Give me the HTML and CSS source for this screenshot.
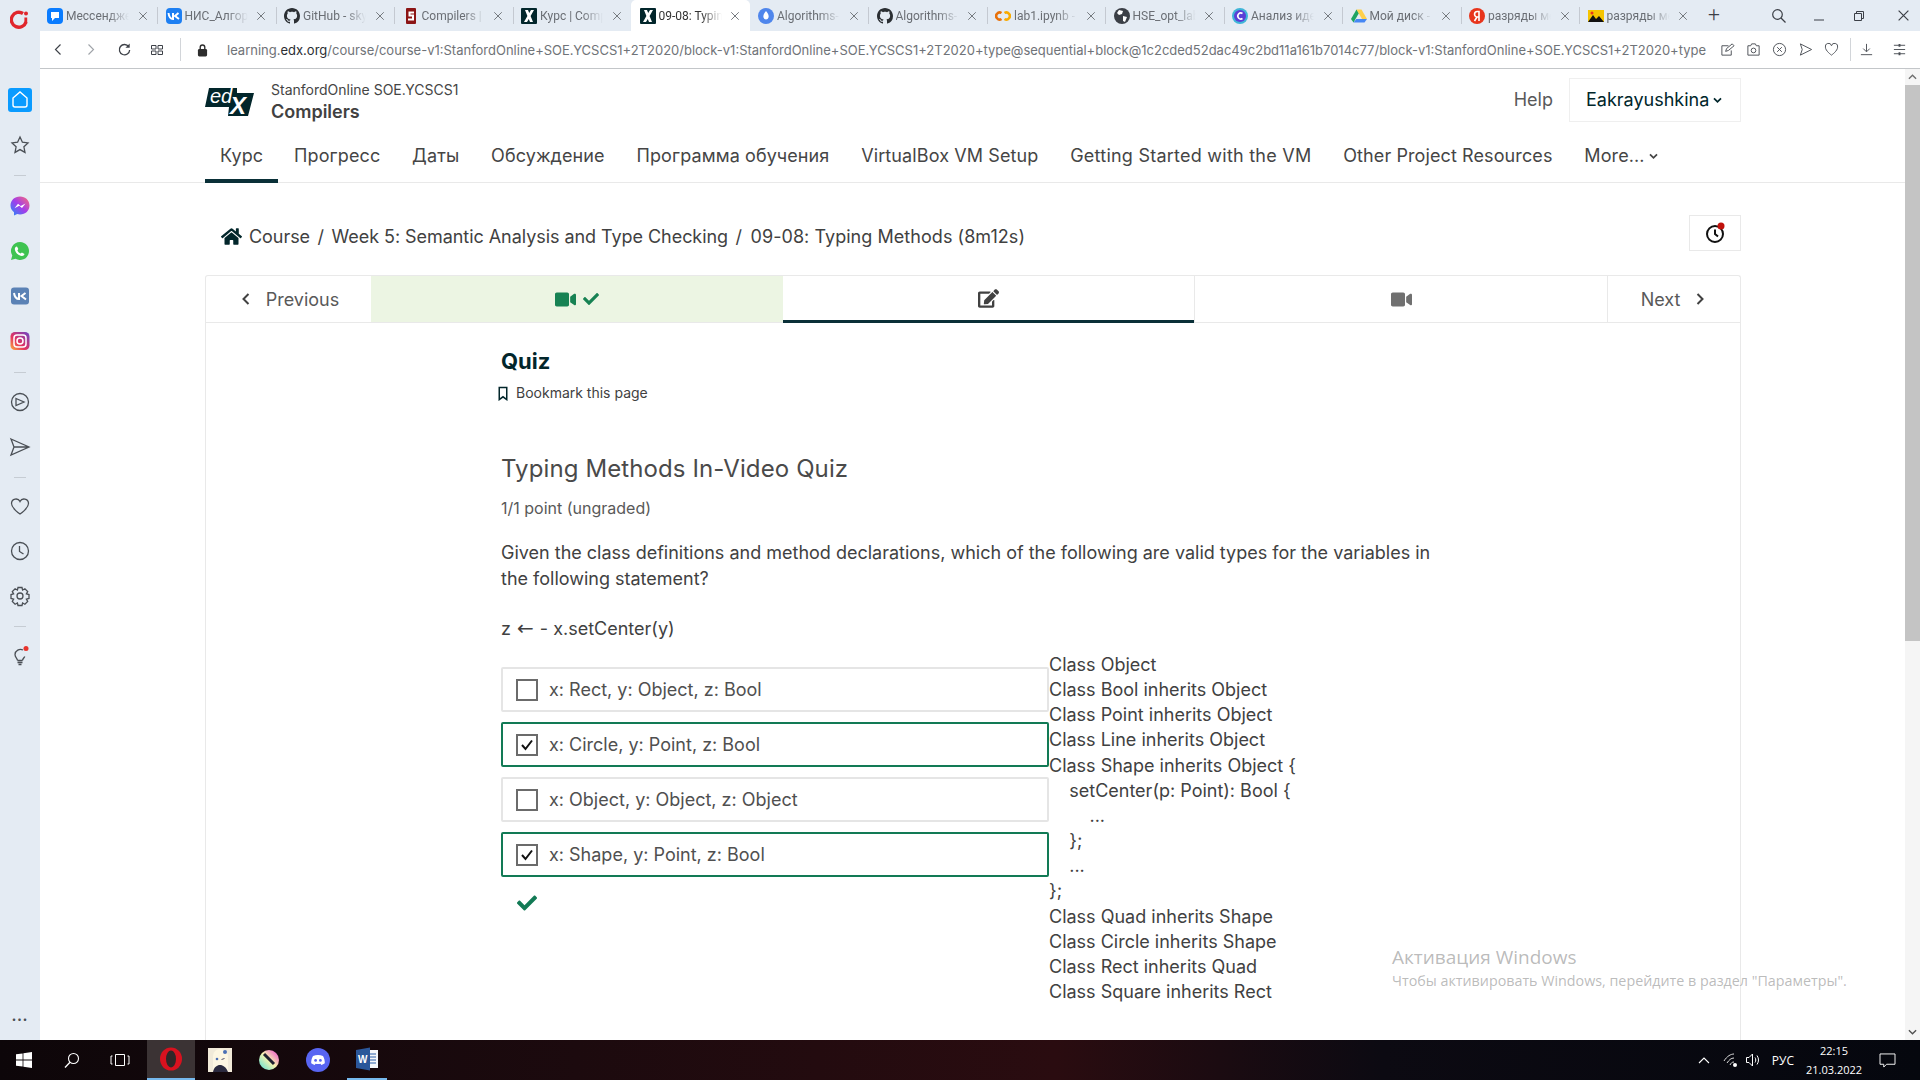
FILE: index.html
```html
<!DOCTYPE html>
<html lang="en">
<head>
<meta charset="utf-8">
<title>09-08: Typing Methods</title>
<link rel="stylesheet" href="styles.css">
</head>
<body>
<svg class="defs" width="0" height="0" aria-hidden="true">
  <symbol id="i-check" viewBox="0 0 512 512"><path fill="currentColor" d="M173.898 439.404l-166.4-166.4c-9.997-9.997-9.997-26.206 0-36.204l36.203-36.204c9.997-9.998 26.207-9.998 36.204 0L192 312.69 432.095 72.596c9.997-9.997 26.207-9.997 36.204 0l36.203 36.204c9.997 9.997 9.997 26.206 0 36.204l-294.4 294.401c-9.998 9.997-26.207 9.997-36.204-.001z"/></symbol>
  <symbol id="i-video" viewBox="0 0 576 512"><path fill="currentColor" d="M336.2 64H47.8C21.4 64 0 85.4 0 111.8v288.4C0 426.6 21.4 448 47.8 448h288.4c26.4 0 47.8-21.4 47.8-47.8V111.8c0-26.4-21.4-47.8-47.8-47.8zm189.4 37.7L416 177.3v157.4l109.6 75.5c21.2 14.6 50.4-.3 50.4-25.8V127.5c0-25.4-29.1-40.4-50.4-25.8z"/></symbol>
  <symbol id="i-close" viewBox="0 0 12 12"><path fill="none" stroke="currentColor" stroke-width="1.1" d="M1.5 1.5l9 9M10.5 1.5l-9 9"/></symbol>
  <symbol id="i-octo" viewBox="0 0 16 16"><path fill="currentColor" d="M8 0C3.58 0 0 3.58 0 8c0 3.54 2.29 6.53 5.47 7.59.4.07.55-.17.55-.38 0-.19-.01-.82-.01-1.49-2.01.37-2.53-.49-2.69-.94-.09-.23-.48-.94-.82-1.13-.28-.15-.68-.52-.01-.53.63-.01 1.08.58 1.23.82.72 1.21 1.87.87 2.33.66.07-.52.28-.87.51-1.07-1.78-.2-3.64-.89-3.64-3.95 0-.87.31-1.59.82-2.15-.08-.2-.36-1.02.08-2.12 0 0 .67-.21 2.2.82.64-.18 1.32-.27 2-.27s1.36.09 2 .27c1.53-1.04 2.2-.82 2.2-.82.44 1.1.16 1.92.08 2.12.51.56.82 1.27.82 2.15 0 3.07-1.87 3.75-3.65 3.95.29.25.54.73.54 1.48 0 1.07-.01 1.93-.01 2.2 0 .21.15.46.55.38A8.01 8.01 0 0 0 16 8c0-4.42-3.58-8-8-8z"/></symbol>
  <symbol id="i-x" viewBox="0 0 16 16"><rect width="16" height="16" rx="1" fill="#02262b"/><path fill="#fff" d="M3 14l3.4-6L4 2h3l1.2 3L10 2h3L9.6 8 12 14H9L7.8 11 6 14z"/></symbol>
  <symbol id="i-globe" viewBox="0 0 16 16"><circle cx="8" cy="8" r="8" fill="#3b3f46"/><path fill="#fff" d="M5 2l4 1-1 3-3 1-2-2zM9 8l4 1-2 5-2-1z"/></symbol>
</svg>

<div class="app">
  <header class="tabstrip">
    <div class="browser-logo">
      <svg width="20" height="22" viewBox="0 0 20 22"><path fill="none" stroke="#e0262c" stroke-width="3.4" d="M13 4.500A7.500 7.500 0 1 0 16 13"/><path fill="none" stroke="#e0262c" stroke-width="2.800" d="M15.800 8.500v6"/><circle cx="16" cy="4.500" r="2" fill="#e0262c"/></svg>
    </div>
    <div class="tabs">
      <div class="tab"><svg class="fav" viewBox="0 0 16 16"><rect width="16" height="16" rx="4" fill="#0a7cff"/><path fill="#fff" d="M4 4h8v6H8l-3 3v-3H4z"/></svg><span class="tab-label">Мессендже</span><svg class="tab-x"><use href="#i-close"/></svg></div>
      <div class="tab"><svg class="fav" viewBox="0 0 16 16"><rect width="16" height="16" rx="4" fill="#1d7ff2"/><path fill="none" stroke="#fff" stroke-width="2" d="M2.5 5c.5 4 2 6 4.500 6V5M12.500 5L9 8l4 3"/></svg><span class="tab-label">НИС_Алгор</span><svg class="tab-x"><use href="#i-close"/></svg></div>
      <div class="tab"><svg class="fav octo"><use href="#i-octo"/></svg><span class="tab-label">GitHub - sky</span><svg class="tab-x"><use href="#i-close"/></svg></div>
      <div class="tab"><svg class="fav" viewBox="0 0 16 16"><rect x="3" width="10" height="16" rx="1" fill="#8c1515"/><path fill="none" stroke="#fff" stroke-width="2" d="M11 4.500H6.500v3h3.500v4H5"/></svg><span class="tab-label">Compilers |</span><svg class="tab-x"><use href="#i-close"/></svg></div>
      <div class="tab"><svg class="fav"><use href="#i-x"/></svg><span class="tab-label">Курс | Comp</span><svg class="tab-x"><use href="#i-close"/></svg></div>
      <div class="tab tab-active"><svg class="fav"><use href="#i-x"/></svg><span class="tab-label">09-08: Typin</span><svg class="tab-x"><use href="#i-close"/></svg></div>
      <div class="tab"><svg class="fav" viewBox="0 0 16 16"><circle cx="8" cy="8" r="8" fill="#4f86ec"/><path fill="#fff" d="M8 3c2.500 3 3 5 2.500 6.500a2.600 2.600 0 0 1-5 0C5 8 5.500 6 8 3z"/></svg><span class="tab-label">Algorithms-</span><svg class="tab-x"><use href="#i-close"/></svg></div>
      <div class="tab"><svg class="fav octo"><use href="#i-octo"/></svg><span class="tab-label">Algorithms-</span><svg class="tab-x"><use href="#i-close"/></svg></div>
      <div class="tab"><svg class="fav" viewBox="0 0 16 16"><path fill="none" stroke="#e8710a" stroke-width="2.600" d="M6.500 5A3.500 3.500 0 1 0 6.500 11"/><path fill="none" stroke="#f9ab00" stroke-width="2.600" d="M9.500 5A3.500 3.500 0 1 1 9.500 11"/></svg><span class="tab-label">lab1.ipynb -</span><svg class="tab-x"><use href="#i-close"/></svg></div>
      <div class="tab"><svg class="fav"><use href="#i-globe"/></svg><span class="tab-label">HSE_opt_lab</span><svg class="tab-x"><use href="#i-close"/></svg></div>
      <div class="tab"><svg class="fav" viewBox="0 0 16 16"><circle cx="8" cy="8" r="8" fill="#3fb5d8"/><circle cx="8" cy="8" r="6" fill="#5b3fd6"/><path fill="none" stroke="#fff" stroke-width="1.600" d="M10.500 5.500a3 3 0 1 0 0 5"/></svg><span class="tab-label">Анализ иде</span><svg class="tab-x"><use href="#i-close"/></svg></div>
      <div class="tab"><svg class="fav" viewBox="0 0 16 16"><path fill="#1fa463" d="M5.500 1.500L0 11l2.500 3.500L8 5z"/><path fill="#ffd04b" d="M5.500 1.500h5L16 11h-5z"/><path fill="#4687f4" d="M2.500 14.500h11L16 11H5.300z"/></svg><span class="tab-label">Мой диск -</span><svg class="tab-x"><use href="#i-close"/></svg></div>
      <div class="tab"><svg class="fav" viewBox="0 0 16 16"><circle cx="8" cy="8" r="8" fill="#e8341c"/><path fill="none" stroke="#fff" stroke-width="1.600" d="M10 13V3.500H8.300a2.500 2.500 0 0 0 0 5.500H10M8 9l-2.500 4"/></svg><span class="tab-label">разряды ме</span><svg class="tab-x"><use href="#i-close"/></svg></div>
      <div class="tab"><svg class="fav" viewBox="0 0 16 16"><rect y="2" width="16" height="12" fill="#f5c400"/><path fill="#111" d="M0 14l5-7 3 4 3-3 5 6z"/><circle cx="4" cy="5" r="1.500" fill="#e8341c"/></svg><span class="tab-label">разряды ме</span><svg class="tab-x"><use href="#i-close"/></svg></div>
      <div class="tab-new">+</div>
    </div>
    <div class="win-controls">
      <svg class="win-search" viewBox="0 0 16 16"><circle cx="6.500" cy="6.500" r="4.800" fill="none" stroke="currentColor" stroke-width="1.200"/><path stroke="currentColor" stroke-width="1.200" d="M10 10l4.500 4.500"/></svg>
      <svg class="win-min" viewBox="0 0 12 12"><path stroke="currentColor" d="M1 8h10"/></svg>
      <svg class="win-max" viewBox="0 0 12 12"><path fill="none" stroke="currentColor" d="M1.500 3.500h7v7h-7zM3.500 3.500v-2h7v7h-2"/></svg>
      <svg class="win-close"><use href="#i-close"/></svg>
    </div>
  </header>

  <div class="toolbar">
    <svg class="tb-back" viewBox="0 0 12 16"><path fill="none" stroke="currentColor" stroke-width="1.400" d="M9 2L3 8l6 6"/></svg>
    <svg class="tb-forward" viewBox="0 0 12 16"><path fill="none" stroke="currentColor" stroke-width="1.400" d="M3 2l6 6-6 6"/></svg>
    <svg class="tb-reload" viewBox="0 0 16 16"><path fill="none" stroke="currentColor" stroke-width="1.400" d="M12.500 5A5.500 5.500 0 1 0 13.500 8.500"/><path fill="currentColor" d="M13.500 1.500v4.500H9z"/></svg>
    <svg class="tb-grid" viewBox="0 0 14 14"><path fill="none" stroke="currentColor" d="M1.500 2.500h4.500v3.500H1.500zM8 2.500h4.500v3.500H8zM1.500 8h4.500v3.500H1.500zM8 8h4.500v3.500H8z"/></svg>
    <span class="tb-div"></span>
    <svg class="tb-lock" viewBox="0 0 12 14"><rect x="1" y="6" width="10" height="8" rx="1.500" fill="#2d2d2d"/><path fill="none" stroke="#2d2d2d" stroke-width="1.500" d="M3.500 6V4a2.500 2.500 0 0 1 5 0v2"/></svg>
    <div class="url">learning.<b>edx.org</b>/course/course-v1:StanfordOnline+SOE.YCSCS1+2T2020/block-v1:StanfordOnline+SOE.YCSCS1+2T2020+type@sequential+block@1c2cded52dac49c2bd11a161b7014c77/block-v1:StanfordOnline+SOE.YCSCS1+2T2020+type</div>
    <div class="tb-actions">
      <svg viewBox="0 0 16 16"><path fill="none" stroke="currentColor" d="M2 4h7M2 4v10h10V9M6 10l1-3 6-5 2 2-6 5z"/></svg>
      <svg viewBox="0 0 16 16"><path fill="none" stroke="currentColor" d="M2 4h3l1-2h4l1 2h3v10H2z"/><circle cx="8" cy="9" r="2.500" fill="none" stroke="currentColor"/></svg>
      <svg viewBox="0 0 16 16"><circle cx="8" cy="8" r="6.500" fill="none" stroke="currentColor"/><path stroke="currentColor" d="M5.500 5.500l5 5M10.500 5.500l-5 5"/></svg>
      <svg viewBox="0 0 16 16"><path fill="none" stroke="currentColor" d="M2.500 2l12 6-12 6 2-6z"/></svg>
      <svg viewBox="0 0 16 16"><path fill="none" stroke="currentColor" d="M8 14S1.500 9.500 1.500 5.500A3.300 3.300 0 0 1 8 4a3.300 3.300 0 0 1 6.500 1.500C14.500 9.500 8 14 8 14z"/></svg>
      <span class="tb-div"></span>
      <svg viewBox="0 0 16 16"><path fill="none" stroke="currentColor" d="M8 2v8M4.500 7L8 10.500 11.500 7M2 13.500h12"/></svg>
      <svg viewBox="0 0 16 16"><path fill="none" stroke="currentColor" d="M2 3.500h12M2 8h12M2 12.500h12"/><path stroke="currentColor" stroke-width="2" d="M8 2v3M8 11v3"/></svg>
    </div>
  </div>

  <div class="workspace">
    <nav class="sidebar">
      <div class="side-item side-home"><svg viewBox="0 0 24 24"><path fill="none" stroke="#fff" stroke-width="1.400" d="M5 10l7-6 7 6v7a2 2 0 0 1-2 2H7a2 2 0 0 1-2-2z"/></svg></div>
      <div class="side-item"><svg viewBox="0 0 24 24"><path fill="none" stroke="#4a4f55" stroke-width="1.300" d="M12 4l2.400 5.200 5.600.7-4.100 3.900 1.100 5.600L12 16.600l-5 2.800 1.100-5.600L4 9.900l5.600-.7z"/></svg></div>
      <span class="side-sep"></span>
      <div class="side-item"><svg viewBox="0 0 24 24"><defs><linearGradient id="msg" x1="0" y1="1" x2="1" y2="0"><stop offset="0" stop-color="#1f8efa"/><stop offset=".5" stop-color="#a33dea"/><stop offset="1" stop-color="#fd6d74"/></linearGradient></defs><path fill="url(#msg)" d="M12 2.500c5.500 0 9.500 3.900 9.500 9s-4 9-9.500 9c-1 0-2-.1-2.800-.4L6 21.500V18.200C3.800 16.500 2.500 14.200 2.500 11.500c0-5.100 4-9 9.500-9z"/><path fill="#fff" d="M6.500 14.200l3.500-4.400 2.700 2.200 4.800-2.500-3.500 4.400-2.700-2.200z"/></svg></div>
      <div class="side-item"><svg viewBox="0 0 24 24"><path fill="#3fc351" d="M12 3a9 9 0 0 0-7.700 13.600L3 21l4.500-1.200A9 9 0 1 0 12 3z"/><path fill="#fff" d="M9 7.500l1.300 2.600-.9 1.300c.8 1.500 1.800 2.500 3.300 3.200l1.200-1 2.600 1.300c-.2 1.300-1.300 2.200-2.700 2.100-3.500-.4-6.700-3.500-7-7 0-1.200.9-2.300 2.200-2.500z"/></svg></div>
      <div class="side-item"><svg viewBox="0 0 24 24"><rect x="3" y="3.500" width="18" height="17" rx="3" fill="#5b82b5"/><path fill="none" stroke="#fff" stroke-width="2" d="M6 9c.6 4 2.300 6 5 6V9M17.500 9L13.500 12l4.500 3.500"/></svg></div>
      <div class="side-item"><svg viewBox="0 0 24 24"><defs><linearGradient id="ig" x1="0" y1="1" x2="1" y2="0"><stop offset="0" stop-color="#fdb03b"/><stop offset=".4" stop-color="#e5325e"/><stop offset="1" stop-color="#6a46c8"/></linearGradient></defs><rect x="2.500" y="3" width="19" height="18" rx="4.500" fill="url(#ig)"/><rect x="6" y="6" width="12" height="12" rx="3" fill="none" stroke="#fff" stroke-width="1.500"/><circle cx="12" cy="12" r="3" fill="none" stroke="#fff" stroke-width="1.500"/></svg></div>
      <span class="side-sep"></span>
      <div class="side-item"><svg viewBox="0 0 24 24"><circle cx="12" cy="12" r="8.500" fill="none" stroke="#4a4f55" stroke-width="1.300"/><path fill="none" stroke="#4a4f55" stroke-width="1.300" d="M8 8.500l8 3.500-8 3.500z"/></svg></div>
      <div class="side-item"><svg viewBox="0 0 24 24"><path fill="none" stroke="#4a4f55" stroke-width="1.300" d="M3 4l18 8-18 8 3-8zM6 12h15"/></svg></div>
      <span class="side-sep"></span>
      <div class="side-item"><svg viewBox="0 0 24 24"><path fill="none" stroke="#4a4f55" stroke-width="1.300" d="M12 20S3.500 14.500 3.500 9.300A4.500 4.500 0 0 1 12 7.500a4.500 4.500 0 0 1 8.500 1.800C20.500 14.500 12 20 12 20z"/></svg></div>
      <div class="side-item"><svg viewBox="0 0 24 24"><circle cx="12" cy="12" r="8.500" fill="none" stroke="#4a4f55" stroke-width="1.300"/><path fill="none" stroke="#4a4f55" stroke-width="1.300" d="M11.500 7v5.500l4 2.500"/></svg></div>
      <div class="side-item"><svg viewBox="0 0 24 24"><circle cx="12" cy="12" r="3" fill="none" stroke="#4a4f55" stroke-width="1.300"/><path fill="none" stroke="#4a4f55" stroke-width="1.300" d="M10 3.500h4l.6 2.600 2.300-1.300 2.800 2.800-1.300 2.300 2.600.6v4l-2.600.6 1.300 2.300-2.800 2.800-2.300-1.300-.6 2.600h-4l-.6-2.600-2.300 1.300-2.800-2.800 1.300-2.300-2.600-.6v-4l2.600-.6-1.300-2.300 2.800-2.800 2.300 1.300z"/></svg></div>
      <span class="side-sep"></span>
      <div class="side-item side-bulb"><svg viewBox="0 0 24 24"><path fill="none" stroke="#4a4f55" stroke-width="1.300" d="M9.500 16.500c0-2-2.500-3-2.500-6a5.500 5.500 0 0 1 8-4.500M14.500 16.500c0-1.500 1.500-2.500 2.300-4M9.500 16.500h5M9.500 18.500h5M10.500 20.500h3"/><circle cx="18" cy="4.500" r="2.500" fill="#e8342c"/></svg></div>
      <div class="side-more">•••</div>
    </nav>

    <main class="page">
      <div class="site-header">
        <div class="brand">
          <svg class="edx-logo" viewBox="0 0 50 30"><polygon points="4,1 32,1 32,6 49,6 43,29 23,29 24,20 0,20" fill="#02262b"/><text x="5" y="16" class="edx-ed">ed</text><text x="25" y="27" class="edx-x">X</text></svg>
          <div class="brand-text">
            <div class="org">StanfordOnline SOE.YCSCS1</div>
            <div class="course">Compilers</div>
          </div>
        </div>
        <div class="user-area">
          <a class="help">Help</a>
          <div class="user-btn">Eakrayushkina<svg class="caret" viewBox="0 0 10 8"><path fill="none" stroke="currentColor" stroke-width="2" d="M1 1.500l4 4 4-4"/></svg></div>
        </div>
      </div>

      <div class="nav-wrap">
        <div class="course-nav">
          <a class="nav-link nav-active">Курс</a>
          <a class="nav-link">Прогресс</a>
          <a class="nav-link">Даты</a>
          <a class="nav-link">Обсуждение</a>
          <a class="nav-link">Программа обучения</a>
          <a class="nav-link">VirtualBox VM Setup</a>
          <a class="nav-link nav-wide">Getting Started with the VM</a>
          <a class="nav-link">Other Project Resources</a>
          <a class="nav-link">More...<svg class="caret" viewBox="0 0 10 8"><path fill="none" stroke="currentColor" stroke-width="2" d="M1 1.500l4 4 4-4"/></svg></a>
        </div>
      </div>

      <div class="container">
        <div class="crumb-row">
          <div class="crumbs">
            <svg class="home" viewBox="0 0 576 512"><path fill="currentColor" d="M280.370 148.260L96 300.110V464a16 16 0 0 0 16 16l112.060-.29a16 16 0 0 0 15.920-16V368a16 16 0 0 1 16-16h64a16 16 0 0 1 16 16v95.640a16 16 0 0 0 16 16.050L464 480a16 16 0 0 0 16-16V300L295.670 148.260a12.190 12.190 0 0 0-15.300 0zM571.600 251.470L488 182.560V44.050a12 12 0 0 0-12-12h-56a12 12 0 0 0-12 12v72.610L318.470 43a48 48 0 0 0-61 0L4.340 251.470a12 12 0 0 0-1.600 16.900l25.500 31A12 12 0 0 0 45.150 301l235.220-193.740a12.190 12.190 0 0 1 15.300 0L530.900 301a12 12 0 0 0 16.900-1.600l25.500-31a12 12 0 0 0-1.700-16.930z"/></svg>
            <span>Course</span><span class="slash">/</span><span>Week 5: Semantic Analysis and Type Checking</span><span class="slash">/</span><span class="crumb-last">09-08: Typing Methods (8m12s)</span>
          </div>
          <div class="clock-btn"><svg viewBox="0 0 24 24"><circle cx="12" cy="13" r="8" fill="none" stroke="#111" stroke-width="2"/><path fill="none" stroke="#111" stroke-width="2" d="M12 8.500V13l3 2.500"/><circle cx="18" cy="5" r="3.500" fill="#c0120c"/></svg></div>
        </div>

        <div class="card">
          <div class="seq-nav">
            <div class="seq-btn seq-prev"><svg class="chev" viewBox="0 0 8 12"><path fill="none" stroke="currentColor" stroke-width="2" d="M6.500 1L1.500 6l5 5"/></svg><span>Previous</span></div>
            <div class="seq-tab seq-done"><svg class="ic-video"><use href="#i-video"/></svg><svg class="ic-check"><use href="#i-check"/></svg></div>
            <div class="seq-tab seq-current"><svg class="ic-edit" viewBox="0 0 576 512"><path fill="currentColor" d="M402.600 83.200l90.200 90.200c3.800 3.800 3.800 10 0 13.800L274.400 405.600l-92.800 10.300c-12.400 1.400-22.900-9.100-21.500-21.500l10.300-92.800L388.800 83.200c3.800-3.800 10-3.800 13.800 0zm162-22.900l-48.800-48.800c-15.200-15.200-39.900-15.200-55.200 0l-35.400 35.400c-3.800 3.800-3.800 10 0 13.800l90.200 90.200c3.800 3.800 10 3.800 13.800 0l35.400-35.400c15.200-15.300 15.200-40 0-55.200zM384 346.200V448H64V128h229.800c3.200 0 6.200-1.300 8.500-3.500l40-40c7.600-7.600 2.200-20.500-8.500-20.500H48C21.500 64 0 85.500 0 112v352c0 26.500 21.500 48 48 48h352c26.500 0 48-21.500 48-48V306.200c0-10.700-12.900-16-20.500-8.500l-40 40c-2.200 2.300-3.500 5.300-3.500 8.500z"/></svg></div>
            <div class="seq-tab seq-next-tab"><svg class="ic-video ic-grey"><use href="#i-video"/></svg></div>
            <div class="seq-btn seq-next"><span>Next</span><svg class="chev" viewBox="0 0 8 12"><path fill="none" stroke="currentColor" stroke-width="2" d="M1.500 1l5 5-5 5"/></svg></div>
          </div>

          <div class="unit">
            <h1 class="unit-title">Quiz</h1>
            <div class="bookmark"><svg viewBox="0 0 12 16"><path fill="none" stroke="currentColor" stroke-width="1.600" d="M2 1.500h8v13l-4-3-4 3z"/></svg><span>Bookmark this page</span></div>
            <h2 class="problem-title">Typing Methods In-Video Quiz</h2>
            <div class="points">1/1 point (ungraded)</div>
            <p class="question">Given the class definitions and method declarations, which of the following are valid types for the variables in the following statement?</p>
            <p class="statement">z <span class="arrow">←</span> - x.setCenter(y)</p>
            <div class="answer-row">
              <div class="choices">
                <label class="choice"><span class="box"></span>x: Rect, y: Object, z: Bool</label>
                <label class="choice choice-on"><span class="box"><svg viewBox="0 0 16 16"><path fill="none" stroke="#111" stroke-width="2" d="M3 8l3.500 4L13 3.500"/></svg></span>x: Circle, y: Point, z: Bool</label>
                <label class="choice"><span class="box"></span>x: Object, y: Object, z: Object</label>
                <label class="choice choice-on"><span class="box"><svg viewBox="0 0 16 16"><path fill="none" stroke="#111" stroke-width="2" d="M3 8l3.500 4L13 3.500"/></svg></span>x: Shape, y: Point, z: Bool</label>
                <svg class="result"><use href="#i-check"/></svg>
              </div>
<pre class="classes">Class Object
Class Bool inherits Object
Class Point inherits Object
Class Line inherits Object
Class Shape inherits Object {
    setCenter(p: Point): Bool {
        ...
    };
    ...
};
Class Quad inherits Shape
Class Circle inherits Shape
Class Rect inherits Quad
Class Square inherits Rect</pre>
            </div>
          </div>
        </div>
      </div>
    </main>

    <div class="scrollbar">
      <svg class="sb-arrow" viewBox="0 0 10 6"><path fill="none" stroke="#6e6e6e" stroke-width="1.500" d="M1 5l4-4 4 4"/></svg>
      <div class="sb-thumb"></div>
      <svg class="sb-arrow" viewBox="0 0 10 6"><path fill="none" stroke="#505050" stroke-width="1.500" d="M1 1l4 4 4-4"/></svg>
    </div>
  </div>

  <footer class="taskbar">
    <svg class="tk-win" viewBox="0 0 16 16"><path fill="#fff" d="M0 2.300l6.600-.9v6.200H0zM7.400 1.300L16 0v7.600H7.400zM0 8.400h6.600v6.200L0 13.700zM7.400 8.400H16V16l-8.600-1.300z"/></svg>
    <svg class="tk-search" viewBox="0 0 16 16"><circle cx="9.500" cy="6.500" r="5" fill="none" stroke="#fff" stroke-width="1.100"/><path stroke="#fff" stroke-width="1.300" d="M6 10.200L1 15.500"/></svg>
    <svg class="tk-view" viewBox="0 0 20 14"><path fill="none" stroke="#fff" d="M5.500 1.500h9v11h-9zM2.500 3H1v8h1.500M17.500 3H19v8h-1.500"/></svg>
    <div class="tk-app tk-opera"><svg viewBox="0 0 24 24"><ellipse cx="12" cy="12" rx="11" ry="11.500" fill="#d8121f"/><ellipse cx="12" cy="12" rx="5" ry="8.500" fill="#2f2728"/></svg></div>
    <div class="tk-app"><svg viewBox="0 0 24 24"><rect width="24" height="24" fill="#f1ead9"/><path fill="#fdf6e2" d="M5 24V9c0-5 3-8 7-8s8 3 8 8v15z"/><path fill="#2b2a3f" d="M5 24c1-5 4-7 7-7s6 2 8 7z"/><circle cx="9" cy="11" r="1.300" fill="#4b6fb5"/><path stroke="#55516e" fill="none" d="M13.500 11.500l3-1"/><circle cx="17" cy="4" r="2" fill="#4b6fb5"/></svg></div>
    <div class="tk-app"><svg viewBox="0 0 24 24"><defs><linearGradient id="krita" x1="0" y1="1" x2="1" y2="0"><stop offset="0" stop-color="#4fe0d9"/><stop offset=".5" stop-color="#f7f3b0"/><stop offset="1" stop-color="#f03fd0"/></linearGradient></defs><circle cx="12" cy="12" r="10" fill="url(#krita)"/><path stroke="#1e2030" stroke-width="3" d="M7 6l10 10"/></svg></div>
    <div class="tk-app"><svg viewBox="0 0 24 24"><circle cx="12" cy="12" r="12" fill="#5865f2"/><path fill="#fff" d="M7 8c3.200-1.400 6.800-1.400 10 0 1.300 2.300 1.900 4.700 1.800 7.300-1.100.9-2.300 1.400-3.500 1.700l-.8-1.300c-1.600.4-3.400.4-5 0l-.8 1.300c-1.200-.3-2.400-.8-3.500-1.700C5.100 12.700 5.700 10.300 7 8z"/><circle cx="9.600" cy="12.400" r="1.400" fill="#5865f2"/><circle cx="14.400" cy="12.400" r="1.400" fill="#5865f2"/></svg></div>
    <div class="tk-app tk-word"><svg viewBox="0 0 24 24"><rect x="8" y="3" width="15" height="18" fill="#f4f6fa"/><path stroke="#2b5ea8" d="M13 7h8M13 10h8M13 13h8M13 16h8"/><path fill="#2b579a" d="M1 3l14-2.500v23L1 21z"/><text x="3" y="15.500" class="tk-w">W</text></svg></div>
    <div class="tray">
      <svg class="tr-up" viewBox="0 0 12 8"><path fill="none" stroke="#fff" stroke-width="1.100" d="M1 7l5-5 5 5"/></svg>
      <svg class="tr-wifi" viewBox="0 0 16 16"><path fill="none" stroke="#ddd" d="M1 9c3-5 7-7 10-7M4 11c2-3 4-5 7-5M7 13c1-2 2-3 4-3"/><circle cx="12" cy="13" r="2" fill="#fff"/></svg>
      <svg class="tr-sound" viewBox="0 0 16 16"><path fill="none" stroke="#fff" d="M1.500 5.500h2.500L7.500 2v12L4 10.500H1.500zM10 5.500c1 1.500 1 3.500 0 5M12 3.500c2 3 2 6 0 9"/></svg>
      <span class="tr-lang">РУС</span>
      <div class="tr-clock"><div>22:15</div><div>21.03.2022</div></div>
      <svg class="tr-note" viewBox="0 0 18 16"><path fill="none" stroke="#fff" d="M1 1h16v11h-9l-3 3v-3H1z"/></svg>
    </div>
  </footer>

  <div class="watermark">
    <div class="wm-title">Активация Windows</div>
    <div class="wm-sub">Чтобы активировать Windows, перейдите в раздел "Параметры".</div>
  </div>
</div>
</body>
</html>
```

FILE: styles.css
```css
* { box-sizing: border-box; }
html, body { margin: 0; height: 100%; overflow: hidden; }
body { font-family: Inter, "Noto Sans", sans-serif; color: #414141; background: #e4ebf3; }
svg { display: block; flex: none; }
.defs { position: absolute; }
.app { height: 1080px; display: flex; flex-direction: column; position: relative; }

/* browser tabs */
.tabstrip { height: 31px; flex: none; display: flex; align-items: center; background: #e4ebf3; font-family: Roboto, "Noto Sans", sans-serif; }
.browser-logo { width: 38.5px; padding: 9px 0 0 10px; height: 31px; }
.tabs { display: flex; height: 31px; flex: none; }
.tab { width: 118.5px; height: 31px; padding: 0 9.5px 0 8.5px; display: flex; align-items: center; position: relative; color: #6a6e74; }
.tab + .tab::before { content: ""; position: absolute; left: 0; top: 7px; height: 17px; width: 1px; background: #c4c9d1; }
.tab-active { background: #fff; border-radius: 5px 5px 0 0; color: #333; }
.tab-active::before, .tab-active + .tab::before { display: none; }
.fav { width: 16px; height: 16px; margin-right: 3px; }
.octo { color: #2b2f33; }
.tab-label { width: 70px; font-size: 12px; white-space: nowrap; -webkit-mask-image: linear-gradient(90deg, #000 60%, transparent 90%); mask-image: linear-gradient(90deg, #000 60%, transparent 90%); }
.tab-x { width: 10px; height: 10px; margin-left: auto; color: #6a6e74; }
.tab-new { width: 30px; margin-left: 7.5px; font-size: 21px; font-weight: 300; line-height: 29px; color: #3c4047; padding-left: 3px; }
.win-controls { margin-left: auto; display: flex; align-items: center; color: #3b3f46; padding-right: 10px; }
.win-search { width: 16px; height: 16px; margin-right: 26px; }
.win-min { width: 12px; height: 12px; margin-right: 28px; margin-top: 4px; }
.win-max { width: 12px; height: 12px; margin-right: 32px; }
.win-close { width: 13px; height: 13px; }

/* address bar */
.toolbar { height: 38px; flex: none; margin-left: 40px; padding: 0 13px 0 13px; background: #fff; border-bottom: 1px solid #c3c6c9; display: flex; align-items: center; color: #3d4148; }
.tb-back, .tb-forward { width: 10px; height: 15px; }
.tb-forward { margin-left: 23px; color: #a0a4a9; }
.tb-reload { width: 15px; height: 15px; margin-left: 21px; }
.tb-grid { width: 14px; height: 14px; margin-left: 18px; }
.tb-div { width: 1px; height: 23px; background: #d2d5d9; flex: none; }
.toolbar > .tb-div { margin-left: 16px; }
.tb-lock { width: 11px; height: 14px; margin-left: 16px; }
.url { flex: none; margin-left: 19px; font-size: 13px; color: #6f7378; white-space: nowrap; }
.url b { font-weight: 400; color: #2b2e33; }
.tb-actions { margin-left: auto; display: flex; align-items: center; gap: 11px; color: #4a4e54; }
.tb-actions svg { width: 15px; height: 15px; }
.tb-actions svg:nth-last-child(2) { margin-left: -2.5px; }
.tb-actions svg:last-child { margin-left: 7px; }

/* layout */
.workspace { flex: 1; min-height: 0; display: flex; }

/* sidebar */
.sidebar { width: 40px; flex: none; display: flex; flex-direction: column; align-items: center; padding-top: 8px; }
.side-item { width: 24px; height: 45px; display: flex; align-items: center; justify-content: center; flex: none; }
.side-item svg { width: 24px; height: 24px; }
.side-home svg { background: #0a9bff; border-radius: 3px; }
.side-sep { width: 12px; height: 1px; background: #c6ccd3; margin: 8px 0 6.5px; flex: none; }
.side-sep:first-of-type { margin-bottom: 7.7px; }
.side-sep:nth-of-type(3) { margin-bottom: 5.3px; }
.side-more { margin-top: auto; height: 26px; font-size: 8px; letter-spacing: 1px; color: #4a4f55; }

/* page */
.page { flex: 1; min-width: 0; background: #fff; overflow: hidden; display: flex; flex-direction: column; }
.site-header { height: 64px; flex: none; padding: 9px 164px 0 165px; display: flex; justify-content: space-between; }
.brand { display: flex; align-items: center; height: 44px; margin-top: 2px; }
.edx-logo { width: 50px; height: 30px; margin-right: 16px; overflow: visible; }
.edx-ed { font: italic 400 20px "Liberation Sans", sans-serif; fill: #fff; }
.edx-x { font: italic 700 24px "Liberation Sans", sans-serif; fill: #fff; }
.org { font-size: 14px; line-height: 20px; color: #454545; }
.course { font-size: 18px; line-height: 24px; font-weight: 600; color: #414141; }
.user-area { display: flex; align-items: center; height: 44px; }
.help { font-size: 18px; color: #595959; margin-right: 16px; padding-bottom: 2px; }
.user-btn { width: 172px; height: 44px; border: 1px solid #efefef; display: flex; align-items: center; padding: 0 0 2px 16px; font-size: 18px; color: #00262b; }
.caret { width: 9px; height: 7px; margin-left: 4px; }
.user-btn .caret { margin-top: 3px; }

.nav-wrap { height: 50px; flex: none; border-bottom: 1px solid #e9e9e9; padding-left: 165px; }
.course-nav { display: flex; height: 50px; }
.nav-link { height: 50px; padding: 0 15.9px 6px; font-size: 18px; letter-spacing: 0.1px; color: #454545; display: flex; align-items: center; }
.nav-link .caret { margin-top: 2px; }
.nav-wide { letter-spacing: 0.24px; }
.nav-active { border-bottom: 4px solid #0a3038; padding: 0 15px 2px; }

.container { margin: 0 164px 0 165px; flex: 1; min-height: 0; display: flex; flex-direction: column; }
.crumb-row { height: 92px; flex: none; display: flex; justify-content: space-between; padding: 32px 0 0 16px; }
.crumbs { display: flex; align-items: center; height: 42px; font-size: 18px; letter-spacing: -0.05px; color: #414141; }
.home { width: 21px; height: 19px; margin-right: 7px; color: #02262b; }
.slash { margin: 0 7.5px; }
.crumb-last { letter-spacing: 0.05px; margin-left: 1px; }
.clock-btn { width: 52px; height: 36px; border: 1px solid #e9e9e9; display: flex; align-items: center; justify-content: center; }
.clock-btn svg { width: 24px; height: 24px; margin-left: -1px; }

.card { flex: 1; min-height: 0; border: 1px solid #e9e9e9; border-bottom: 0; border-radius: 3px 3px 0 0; display: flex; flex-direction: column; }
.seq-nav { height: 47px; flex: none; display: flex; border-bottom: 1px solid #e9e9e9; }
.seq-btn { display: flex; align-items: center; justify-content: center; gap: 16px; font-size: 18px; color: #595959; flex: none; }
.seq-prev { width: 165px; padding-left: 4px; }
.seq-next { width: 133px; padding-right: 3px; border-left: 1px solid #e9e9e9; }
.chev { width: 8px; height: 12px; color: #414141; }
.seq-tab { flex: 1; display: flex; align-items: center; justify-content: center; gap: 7px; }
.seq-done { background: #ecf5e3; color: #178253; }
.seq-current { border-bottom: 3px solid #0a3038; margin-bottom: -1px; color: #414141; }
.seq-next-tab { border-left: 1px solid #e9e9e9; }
.ic-video { width: 21px; height: 19px; }
.ic-grey { color: #707070; }
.ic-check { width: 16px; height: 16px; }
.ic-edit { width: 21px; height: 19px; }

.unit { padding: 27px 0 0 295px; overflow: hidden; flex: 1; }
.unit-title { margin: 0; font-size: 22px; line-height: 22px; font-weight: 700; color: #02262b; }
.bookmark { display: flex; align-items: center; gap: 7px; margin: 10px 0 0 -4px; font-size: 14px; line-height: 22px; color: #414141; }
.bookmark svg { width: 12px; height: 15px; color: #02262b; }
.problem-title { margin: 49px 0 0; font-size: 24px; line-height: 32px; font-weight: 400; color: #4a4a4a; letter-spacing: 0.11px; }
.points { margin-top: 11px; font-size: 16px; line-height: 24px; color: #595959; }
.question { margin: 20px 0 0; width: 960px; font-size: 18px; line-height: 25.5px; color: #414141; }
.statement { margin: 25px 0 0; font-size: 18px; line-height: 25px; color: #414141; }
.arrow { font-family: "DejaVu Sans", sans-serif; font-size: 20px; line-height: 1; margin: 0 1px; }
.answer-row { display: flex; margin-top: 11px; }
.choices { width: 548px; flex: none; padding-top: 15px; display: flex; flex-direction: column; gap: 10px; }
.choice { height: 45px; display: flex; align-items: center; border: 2px solid #e5e5e5; border-radius: 2px; padding-left: 13px; font-size: 18px; color: #505050; }
.choice-on { border-color: #127a55; }
.box { width: 22px; height: 22px; border: 2px solid #6b6b6b; margin-right: 11px; display: flex; align-items: center; justify-content: center; flex: none; }
.box svg { width: 16px; height: 16px; }
.result { width: 20px; height: 20px; margin: 6px 0 0 16px; color: #127a55; }
.classes { margin: 0; font-family: Inter, "Noto Sans", sans-serif; font-size: 18px; line-height: 25.15px; color: #414141; }

/* scrollbar */
.scrollbar { width: 15px; flex: none; background: #f5f5f5; display: flex; flex-direction: column; align-items: center; }
.sb-arrow { width: 9px; height: 6px; margin: 5px 0; flex: none; }
.sb-thumb { width: 15px; height: 556px; background: #c4c4c4; margin-bottom: auto; }

/* taskbar */
.taskbar { height: 40px; flex: none; display: flex; align-items: center; background: linear-gradient(90deg, #0d0609 0, #1c0a0e 30%, #2a0c10 55%, #0c0a12 72%, #05070e 100%); }
.tk-win { width: 16px; height: 16px; margin-left: 16px; }
.tk-search { width: 16px; height: 16px; margin-left: 32px; }
.tk-view { width: 20px; height: 14px; margin-left: 30px; }
.tk-app { width: 49px; height: 40px; display: flex; align-items: center; justify-content: center; }
.tk-app svg { width: 24px; height: 24px; }
.tk-opera { width: 48px; margin-left: 17px; background: #3b3334; border-bottom: 2px solid #76b9ed; }
.tk-word { width: 40px; margin-left: 4.5px; border-bottom: 2px solid #76b9ed; }
.tk-w { font: 700 10px "Liberation Sans", sans-serif; fill: #fff; }
.tray { margin-left: auto; display: flex; align-items: center; color: #fff; font-family: "Open Sans", "Noto Sans", sans-serif; padding-right: 24px; }
.tr-up { width: 12px; height: 8px; }
.tr-wifi { width: 16px; height: 16px; margin-left: 13px; }
.tr-sound { width: 16px; height: 16px; margin-left: 5.5px; }
.tr-lang { font-size: 12px; margin-left: 11px; }
.tr-clock { font-size: 11px; line-height: 19px; text-align: center; margin-left: 12px; width: 56px; }
.tr-note { width: 17px; height: 15px; margin-left: 17px; }

.watermark { position: absolute; left: 1392px; top: 944px; font-family: "Open Sans", "Noto Sans", sans-serif; color: rgba(130,130,130,.55); }
.wm-title { font-size: 19px; line-height: 27px; }
.wm-sub { font-size: 14.3px; line-height: 19px; }
```
